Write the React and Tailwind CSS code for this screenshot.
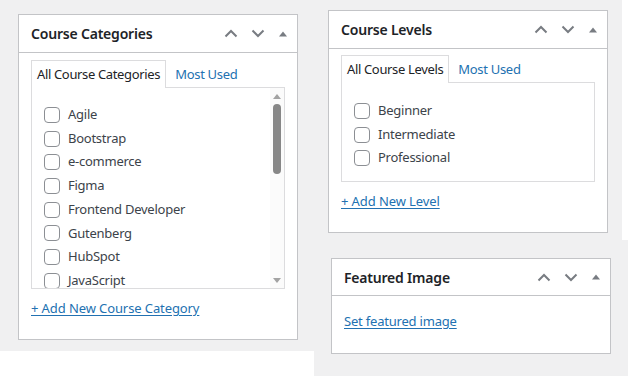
import React from 'react';

const font = "font-['Noto_Sans',sans-serif]";

function PanelControls() {
  return (
    <div className="flex items-center gap-[13px] text-[#787c82]">
      <svg width="14" height="9" viewBox="0 0 14 9" fill="none">
        <polyline points="1.5,7.5 7,2 12.5,7.5" stroke="currentColor" strokeWidth="2" />
      </svg>
      <svg width="14" height="9" viewBox="0 0 14 9" fill="none">
        <polyline points="1.5,1.5 7,7 12.5,1.5" stroke="currentColor" strokeWidth="2" />
      </svg>
      <svg width="8" height="6" viewBox="0 0 8 6" className="ml-[1px]">
        <polygon points="0,5.5 4,0.5 8,5.5" fill="currentColor" />
      </svg>
    </div>
  );
}

function Panel({ title, className, headerClass = 'h-[38px]', children }) {
  return (
    <div className={`bg-white border border-[#c3c4c7] w-[280px] ${className}`}>
      <div className={`flex items-center justify-between border-b border-[#c3c4c7] pl-[12px] pr-[10px] ${headerClass}`}>
        <h2 className="text-[14px] font-semibold text-[#1d2327] tracking-[-0.2px] whitespace-nowrap">{title}</h2>
        <PanelControls />
      </div>
      {children}
    </div>
  );
}

function Checkbox({ label }) {
  return (
    <label className="flex items-center gap-[8px] h-[23.7px]">
      <span className="w-[16px] h-[16px] border border-[#8c8f94] rounded-[4px] bg-white shrink-0" />
      <span className="text-[13px] text-[#3c434a] tracking-[-0.25px] whitespace-nowrap">{label}</span>
    </label>
  );
}

function Tabs({ active }) {
  return (
    <div className="flex items-end h-[27px]">
      <div className="h-[28px] border border-[#dcdcde] border-b-0 bg-white px-[5px] flex items-center text-[13px] text-[#1d2327] tracking-[-0.35px] whitespace-nowrap relative z-10">
        {active}
      </div>
      <a className="px-[9px] h-[27px] flex items-center text-[13px] text-[#2271b1] tracking-[-0.3px] whitespace-nowrap">Most Used</a>
    </div>
  );
}

const categories = ['Agile', 'Bootstrap', 'e-commerce', 'Figma', 'Frontend Developer', 'Gutenberg', 'HubSpot', 'JavaScript'];
const levels = ['Beginner', 'Intermediate', 'Professional'];

export default function App() {
  return (
    <div className={`w-[628px] h-[376px] flex bg-[#f0f0f1] overflow-hidden ${font}`}>
      {/* Left column */}
      <div className="w-[314px] flex flex-col">
        <div className="h-[351px] pt-[14px] pl-[18px]">
          <Panel title="Course Categories" className="h-[326px]">
            <div className="px-[12px] pt-[8px]">
              <Tabs active="All Course Categories" />
              <div className="h-[202px] border border-[#dcdcde] flex -mt-px">
                <div className="flex-1 pl-[12px] pt-[15px] overflow-hidden">
                  {categories.map((c) => (
                    <Checkbox key={c} label={c} />
                  ))}
                </div>
                <div className="w-[14px] flex flex-col items-center pt-[6px] pb-[5px] bg-[#fbfbfb]">
                  <svg width="8" height="5" viewBox="0 0 8 5">
                    <polygon points="0,5 4,0 8,5" fill="#a3a3a3" />
                  </svg>
                  <div className="w-[8px] h-[70px] rounded-full bg-[#878787] mt-[5px]" />
                  <div className="flex-1" />
                  <svg width="8" height="5" viewBox="0 0 8 5">
                    <polygon points="0,0 8,0 4,5" fill="#a3a3a3" />
                  </svg>
                </div>
              </div>
              <a className="block mt-[10px] text-[13px] text-[#2271b1] underline underline-offset-[2px] tracking-[-0.1px]">+ Add New Course Category</a>
            </div>
          </Panel>
        </div>
        <div className="flex-1 bg-white" />
      </div>

      {/* Right column */}
      <div className="flex-1 flex flex-col">
        <div className="h-[240px] flex">
          <div className="flex-1 pt-[10px] pl-[14px]">
            <Panel title="Course Levels" className="h-[223px]">
              <div className="px-[12px] pt-[7px]">
                <Tabs active="All Course Levels" />
                <div className="h-[100px] border border-[#dcdcde] -mt-px pl-[12px] pt-[16px]">
                  {levels.map((l) => (
                    <Checkbox key={l} label={l} />
                  ))}
                </div>
                <a className="block mt-[10px] text-[13px] text-[#2271b1] underline underline-offset-[2px] tracking-[-0.1px]">+ Add New Level</a>
              </div>
            </Panel>
          </div>
          <div className="w-[6px] bg-white" />
        </div>
        <div className="flex-1 pt-[18px] pl-[17px]">
          <Panel title="Featured Image" className="h-[96px]" headerClass="h-[37px]">
            <div className="px-[12px] pt-[12px]">
              <a className="text-[13px] text-[#2271b1] underline underline-offset-[2px] tracking-[-0.2px]">Set featured image</a>
            </div>
          </Panel>
        </div>
      </div>
    </div>
  );
}
